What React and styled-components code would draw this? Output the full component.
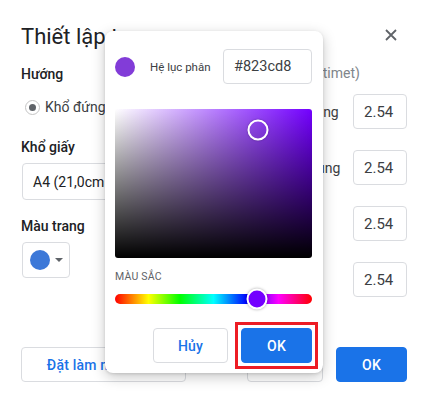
import React from "react";
import styled, { createGlobalStyle } from "styled-components";

const Global = createGlobalStyle`
  html, body { margin: 0; padding: 0; background: #fff; }
  body { font-family: Roboto, "Noto Sans", Arial, sans-serif; color: #202124; }
  * { box-sizing: border-box; }
`;

const Dialog = styled.div`
  position: relative;
  width: 433px;
  height: 405px;
  background: #fff;
  padding: 0 26px 0 21px;
  display: flex;
  flex-direction: column;
  overflow: hidden;
`;

const Header = styled.div`
  margin-top: 22px;
  height: 30px;
  display: flex;
  align-items: center;
  justify-content: space-between;
`;

const Title = styled.h1`
  margin: 0;
  font-size: 22px;
  font-weight: 400;
  line-height: 30px;
  color: #202124;
  white-space: nowrap;
`;

const CloseBtn = styled.button`
  border: 0;
  background: none;
  padding: 0;
  margin-right: 9px;
  margin-top: -4px;
  width: 14px;
  height: 14px;
  display: flex;
  align-items: center;
  justify-content: center;
`;

const Body = styled.div`
  display: flex;
  justify-content: space-between;
`;

const LeftCol = styled.div`
  display: flex;
  flex-direction: column;
  padding-top: 12px;
`;

const SectionLabel = styled.div`
  font-size: 14px;
  font-weight: 500;
  line-height: 20px;
  color: #202124;
  margin-top: ${(p) => p.$mt || 0}px;
  white-space: nowrap;
`;

const RadioRow = styled.label`
  margin-top: 13px;
  height: 20px;
  display: flex;
  align-items: center;
  gap: 5px;
  font-size: 14px;
  color: #3c4043;
  margin-left: 4px;
`;

const Radio = styled.span`
  width: 15px;
  height: 15px;
  border-radius: 50%;
  border: 1.5px solid #c4c4c4;
  display: flex;
  align-items: center;
  justify-content: center;
  &::after {
    content: "";
    width: 7px;
    height: 7px;
    border-radius: 50%;
    background: #5f6368;
  }
`;

const Select = styled.div`
  margin-top: 6px;
  width: 190px;
  height: 37px;
  border: 1px solid #dadce0;
  border-radius: 4px;
  display: flex;
  align-items: center;
  padding-left: 10px;
  font-size: 14px;
  color: #202124;
  white-space: nowrap;
  margin-left: 1px;
`;

const ColorButton = styled.div`
  margin-top: 6px;
  margin-left: 1px;
  width: 48px;
  height: 36px;
  border: 1px solid #dadce0;
  border-radius: 4px;
  display: flex;
  align-items: center;
  padding-left: 7px;
  gap: 5px;
`;

const Dot = styled.span`
  width: ${(p) => p.$size}px;
  height: ${(p) => p.$size}px;
  border-radius: 50%;
  background: ${(p) => p.$color};
  flex: none;
`;

const Caret = styled.span`
  width: 0;
  height: 0;
  border-left: 4px solid transparent;
  border-right: 4px solid transparent;
  border-top: 4px solid #5f6368;
`;

const RightCol = styled.div`
  padding-top: 11px;
  display: flex;
  flex-direction: column;
  width: 130px;
`;

const MarginTitle = styled.div`
  font-size: 14px;
  line-height: 20px;
  color: #80868b;
  white-space: nowrap;
`;

const MarginGrid = styled.div`
  margin-top: 11px;
  display: grid;
  grid-template-columns: 1fr 54px;
  column-gap: 10px;
  row-gap: 21px;
  align-items: center;
`;

const MarginLabel = styled.span`
  font-size: 14px;
  color: #3c4043;
  white-space: nowrap;
`;

const NumInput = styled.div`
  height: 35px;
  border: 1px solid #dadce0;
  border-radius: 4px;
  display: flex;
  align-items: center;
  padding-left: 10px;
  font-size: 15px;
  color: #3c4043;
`;

const Footer = styled.div`
  margin-top: 50px;
  display: flex;
  align-items: center;
`;

const Button = styled.button`
  height: 35px;
  width: ${(p) => p.$w}px;
  border-radius: 4px;
  font-family: Roboto, "Noto Sans", Arial, sans-serif;
  font-size: 14px;
  font-weight: 500;
  letter-spacing: 0.2px;
  cursor: pointer;
  margin-left: ${(p) => p.$ml || 0}px;
  border: 1px solid ${(p) => (p.$primary ? "#1a73e8" : "#dadce0")};
  background: ${(p) => (p.$primary ? "#1a73e8" : "#fff")};
  color: ${(p) => (p.$primary ? "#fff" : "#1a73e8")};
  white-space: nowrap;
  overflow: hidden;
  padding: 0;
  display: block;
`;

const Highlight = styled.span`
  display: block;
  margin: -6px;
  padding: 3px;
  border: 3px solid #ed1c24;
`;

const Spacer = styled.div`
  flex: 1;
`;

/* ---------- Color picker popup (overlay) ---------- */

const Popup = styled.div`
  position: absolute;
  left: 105px;
  top: 31px;
  width: 218px;
  height: 342px;
  background: #fff;
  border-radius: 8px;
  box-shadow: 0 4px 14px rgba(0, 0, 0, 0.22), 0 1px 3px rgba(0, 0, 0, 0.12);
  padding: 18px 11px 0 10px;
  display: flex;
  flex-direction: column;
`;

const PickerTop = styled.div`
  display: flex;
  align-items: center;
  height: 35px;
`;

const HexLabel = styled.span`
  margin-left: 15px;
  font-size: 11.5px;
  color: #3c4043;
  flex: 1;
  white-space: nowrap;
`;

const HexInput = styled.div`
  width: 89px;
  height: 35px;
  border: 1px solid #dadce0;
  border-radius: 4px;
  display: flex;
  align-items: center;
  padding-left: 10px;
  font-size: 14.5px;
  color: #3c4043;
`;

const SatBox = styled.div`
  position: relative;
  margin-top: 25px;
  width: 197px;
  height: 149px;
  border-radius: 3px;
  background: linear-gradient(to top, #000, rgba(0, 0, 0, 0)),
    linear-gradient(to right, #fff, ${(p) => p.$hue});
`;

const SatCursor = styled.span`
  position: absolute;
  width: 21px;
  height: 21px;
  border-radius: 50%;
  border: 2px solid #fff;
  box-shadow: 0 0 2px rgba(0, 0, 0, 0.35);
  transform: translate(-50%, -50%);
`;

const HueLabel = styled.div`
  margin-top: 12px;
  font-size: 10.5px;
  line-height: 14px;
  color: #5f6368;
  letter-spacing: 0.2px;
`;

const HueTrack = styled.div`
  position: relative;
  margin-top: 10px;
  height: 10px;
  border-radius: 5px;
  background: linear-gradient(
    to right,
    #f00 0%,
    #ff0 17%,
    #0f0 33%,
    #0ff 50%,
    #00f 67%,
    #f0f 83%,
    #f00 100%
  );
`;

const HueThumb = styled.span`
  position: absolute;
  top: 50%;
  width: 21px;
  height: 21px;
  border-radius: 50%;
  border: 2px solid #fff;
  box-shadow: 0 0 3px rgba(0, 0, 0, 0.35);
  transform: translate(-50%, -50%);
`;

const PickerActions = styled.div`
  margin-top: 24px;
  display: flex;
  justify-content: flex-end;
  gap: 13px;
`;

const CloseIcon = () => (
  <svg width="12" height="12" viewBox="0 0 12 12">
    <path d="M1 1 L11 11 M11 1 L1 11" stroke="#5f6368" strokeWidth="1.8" />
  </svg>
);

const margins = [
  ["Trên cùng", "2.54"],
  ["Dưới cùng", "2.54"],
  ["Trái", "2.54"],
  ["Phải", "2.54"],
];

export default function App() {
  const hue = "hsl(267, 100%, 50%)";
  return (
    <>
      <Global />
      <Dialog>
        <Header>
          <Title>Thiết lập trang</Title>
          <CloseBtn aria-label="Đóng">
            <CloseIcon />
          </CloseBtn>
        </Header>
        <Body>
          <LeftCol>
            <SectionLabel>Hướng</SectionLabel>
            <RadioRow>
              <Radio />
              Khổ đứng
            </RadioRow>
            <SectionLabel $mt={20}>Khổ giấy</SectionLabel>
            <Select>A4 (21,0cm x 29,7cm)</Select>
            <SectionLabel $mt={16}>Màu trang</SectionLabel>
            <ColorButton>
              <Dot $size={20} $color="#3c78d8" />
              <Caret />
            </ColorButton>
          </LeftCol>
          <RightCol>
            <MarginTitle>Lề (centimet)</MarginTitle>
            <MarginGrid>
              {margins.map(([label, val]) => (
                <React.Fragment key={label}>
                  <MarginLabel>{label}</MarginLabel>
                  <NumInput>{val}</NumInput>
                </React.Fragment>
              ))}
            </MarginGrid>
          </RightCol>
        </Body>
        <Footer>
          <Button $w={165}>Đặt làm mặc định</Button>
          <Spacer />
          <Button $w={76}>Hủy</Button>
          <Button $w={71} $ml={13} $primary>
            OK
          </Button>
        </Footer>

        <Popup>
          <PickerTop>
            <Dot $size={20} $color="#823cd8" />
            <HexLabel>Hệ lục phân</HexLabel>
            <HexInput>#823cd8</HexInput>
          </PickerTop>
          <SatBox $hue={hue}>
            <SatCursor style={{ left: 143, top: 21 }} />
          </SatBox>
          <HueLabel>MÀU SẮC</HueLabel>
          <HueTrack>
            <HueThumb style={{ left: 142, background: hue }} />
          </HueTrack>
          <PickerActions>
            <Button $w={75}>Hủy</Button>
            <Highlight>
              <Button $w={71} $primary>
                OK
              </Button>
            </Highlight>
          </PickerActions>
        </Popup>
      </Dialog>
    </>
  );
}
